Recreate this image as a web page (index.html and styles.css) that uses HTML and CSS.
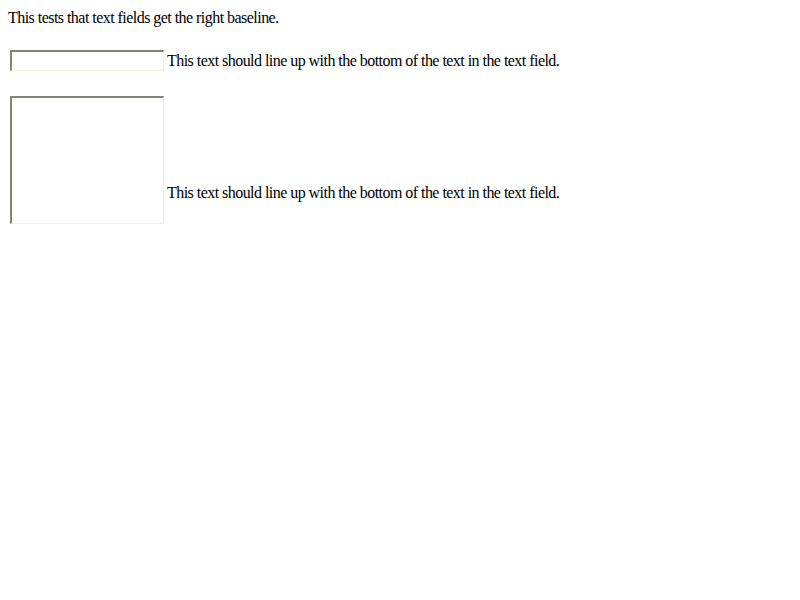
FILE: index.html
```html
<!DOCTYPE html>
<html>
<head>
<meta charset="utf-8">
<link rel="stylesheet" href="styles.css">
</head>
<body>
<div class="intro">This tests that text fields get the right baseline.</div>
<div class="row row-input">
  <input class="field" type="text">
  <span class="label label-input">This text should line up with the bottom of the text in the text field.</span>
</div>
<div class="row row-area">
  <textarea class="area"></textarea>
  <span class="label label-area">This text should line up with the bottom of the text in the text field.</span>
</div>
</body>
</html>
```
FILE: styles.css
```css
html, body {
  background: #ffffff;
}
body {
  margin: 8px;
  font-family: "Liberation Serif", "Times New Roman", serif;
  font-size: 16px;
  letter-spacing: -0.54px;
  color: #000000;
}
.intro {
  line-height: 20px;
}
.row {
  display: flex;
  align-items: flex-end;
}
.row-input {
  margin-top: 22px;
}
.row-area {
  margin-top: 25px;
}
.field,
.area {
  box-sizing: border-box;
  width: 154px;
  margin: 0 0 0 2px;
  padding: 0;
  background: #ffffff;
  border-style: solid;
  border-width: 2px 1px 1px 2px;
  border-top-color: #84837a;
  border-left-color: #84837a;
  border-right-color: #f1efe2;
  border-bottom-color: #f1efe2;
  outline: none;
  resize: none;
  font: inherit;
}
.field {
  height: 21px;
}
.area {
  height: 128px;
  display: block;
}
.label {
  line-height: 20px;
  margin-left: 3px;
  white-space: nowrap;
}
.label-input {
  padding-bottom: 0;
}
.label-area {
  padding-bottom: 21px;
}
```
